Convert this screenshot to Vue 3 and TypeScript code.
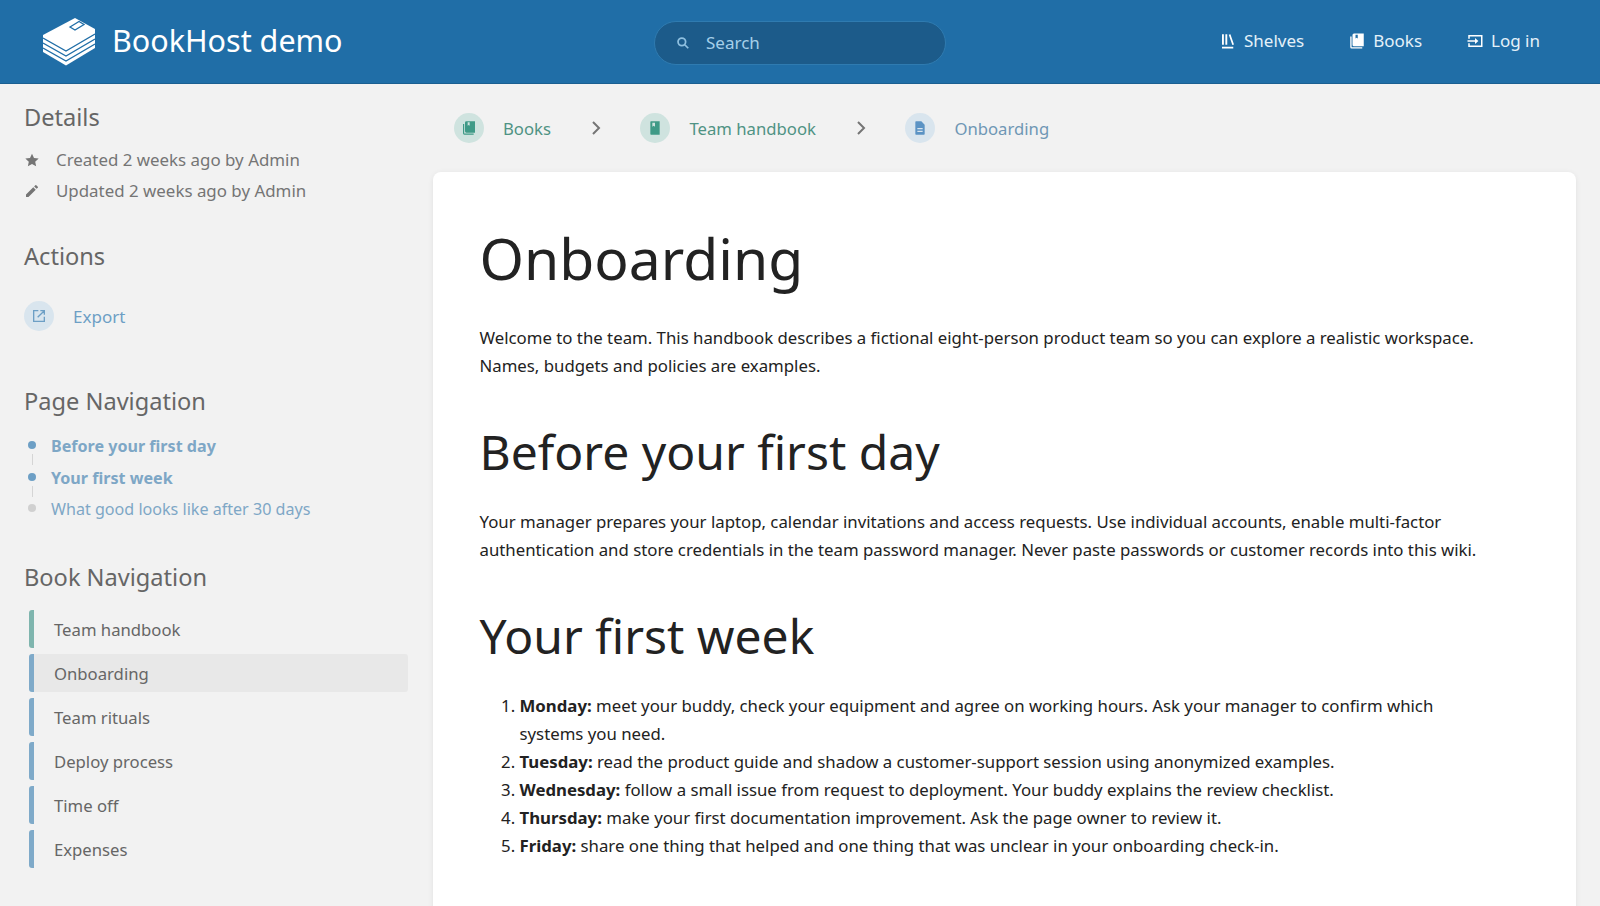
<script setup lang="ts">
interface NavItem {
  label: string
  active?: boolean
}

const pageNav: NavItem[] = [
  { label: 'Before your first day', active: true },
  { label: 'Your first week', active: true },
  { label: 'What good looks like after 30 days' },
]

const bookNav = ['Onboarding', 'Team rituals', 'Deploy process', 'Time off', 'Expenses']

const week = [
  { day: 'Monday:', text: 'meet your buddy, check your equipment and agree on working hours. Ask your manager to confirm which systems you need.' },
  { day: 'Tuesday:', text: 'read the product guide and shadow a customer-support session using anonymized examples.' },
  { day: 'Wednesday:', text: 'follow a small issue from request to deployment. Your buddy explains the review checklist.' },
  { day: 'Thursday:', text: 'make your first documentation improvement. Ask the page owner to review it.' },
  { day: 'Friday:', text: 'share one thing that helped and one thing that was unclear in your onboarding check-in.' },
]
</script>

<template>
  <header class="header">
    <div class="brand">
      <svg class="logo" viewBox="0 0 52 48">
        <path fill="#fff" d="M0 17 L32 0 L52 11 L52 30 L23 47.500 L0 34 Z" />
        <g fill="none" stroke="#206ea7" stroke-width="1.300">
          <path d="M0 20 L23 33 L52 16" />
          <path d="M0 25 L23 38 L52 21" />
          <path d="M0 30 L23 43 L52 26" />
          <path d="M27 9 L36 3.500 L41 6.500 L32 12 Z" />
        </g>
      </svg>
      <span class="site-name">BookHost demo</span>
    </div>
    <div class="search">
      <svg class="search-icon" viewBox="0 0 24 24" fill="none" stroke="#8fc0e0" stroke-width="3">
        <circle cx="10" cy="10" r="6.500" />
        <path d="M15 15 L21 21" />
      </svg>
      <span>Search</span>
    </div>
    <nav class="links">
      <a class="link">
        <svg viewBox="0 0 24 24" fill="#fff"><path d="M4 3h2.500v14H4zM8.500 3H11v14H8.500zM13 3.800l2.200-.8 4.800 13.500-2.200.8zM4 19.500h15V22H4z" /></svg>
        Shelves
      </a>
      <a class="link">
        <svg viewBox="0 0 24 24" fill="#fff"><path d="M8 2h13v17H8a2 2 0 0 1-2-2V4a2 2 0 0 1 2-2zM10 3.500v5l1.500-1 1.500 1v-5zM3 6h1.800v14.200H19V22H5a2 2 0 0 1-2-2z" /></svg>
        Books
      </a>
      <a class="link">
        <svg viewBox="0 0 24 24" fill="#fff"><path d="M3 4h19v16H3v-5h2v3h15V6H5v3H3zM2 11h10V8l4.500 4L12 16v-3H2z" /></svg>
        Log in
      </a>
    </nav>
  </header>

  <main class="layout">
    <aside class="sidebar">
      <section class="details">
        <h5>Details</h5>
        <div class="meta">
          <svg viewBox="0 0 24 24" fill="#757575"><path d="M12 2.500l3 6.500 7 .8-5.200 4.700 1.400 7L12 17.900l-6.200 3.600 1.400-7L2 9.800 9 9z" /></svg>
          Created 2 weeks ago by Admin
        </div>
        <div class="meta">
          <svg viewBox="0 0 24 24" fill="#757575"><path d="M3 17.300V21h3.700L17.600 10.100 13.900 6.400zM20.700 7a1 1 0 0 0 0-1.400l-2.300-2.300a1 1 0 0 0-1.400 0l-1.800 1.800 3.700 3.700z" /></svg>
          Updated 2 weeks ago by Admin
        </div>
      </section>

      <section class="actions">
        <h5>Actions</h5>
        <a class="action">
          <span class="badge badge-page">
            <svg viewBox="0 0 24 24" fill="none" stroke="#6d9fc5" stroke-width="2"><path d="M11 4H4v16h16v-7M10 14L20 4M14 4h6v6" /></svg>
          </span>
          Export
        </a>
      </section>

      <section class="page-nav">
        <h5>Page Navigation</h5>
        <ul class="toc">
          <li v-for="item in pageNav" :key="item.label" :class="{ active: item.active }">{{ item.label }}</li>
        </ul>
      </section>

      <section class="book-nav">
        <h5>Book Navigation</h5>
        <div class="chapter book-row">Team handbook</div>
        <div
          v-for="(name, i) in bookNav"
          :key="name"
          class="chapter"
          :class="{ current: i === 0 }"
        >
          {{ name }}
        </div>
      </section>
    </aside>

    <div class="content">
      <div class="crumbs">
        <a class="crumb book">
          <span class="badge badge-book">
            <svg viewBox="0 0 24 24" fill="#3f9a87"><path d="M8 2h13v17H8a2 2 0 0 1-2-2V4a2 2 0 0 1 2-2zM10 3.500v5l1.500-1 1.500 1v-5zM3 6h1.800v14.200H19V22H5a2 2 0 0 1-2-2z" /></svg>
          </span>
          Books
        </a>
        <svg class="chevron" viewBox="0 0 12 16" fill="none" stroke="#757575" stroke-width="2"><path d="M3 2l6 6-6 6" /></svg>
        <a class="crumb book">
          <span class="badge badge-book">
            <svg viewBox="0 0 24 24" fill="#3f9a87"><path d="M6 2h13v20H6a1 1 0 0 1-1-1V3a1 1 0 0 1 1-1zM8 4v6l2-1.500L12 10V4z" /></svg>
          </span>
          Team handbook
        </a>
        <svg class="chevron" viewBox="0 0 12 16" fill="none" stroke="#757575" stroke-width="2"><path d="M3 2l6 6-6 6" /></svg>
        <a class="crumb page">
          <span class="badge badge-page">
            <svg viewBox="0 0 24 24" fill="#5b93c4"><path d="M6 2h8l5 5v14a1 1 0 0 1-1 1H6a1 1 0 0 1-1-1V3a1 1 0 0 1 1-1zM8 12v2h8v-2zM8 16v2h8v-2z" /></svg>
          </span>
          Onboarding
        </a>
      </div>

      <article class="card">
        <h1>Onboarding</h1>
        <p>Welcome to the team. This handbook describes a fictional eight-person product team so you can explore a realistic workspace. Names, budgets and policies are examples.</p>
        <h2>Before your first day</h2>
        <p>Your manager prepares your laptop, calendar invitations and access requests. Use individual accounts, enable multi-factor authentication and store credentials in the team password manager. Never paste passwords or customer records into this wiki.</p>
        <h2>Your first week</h2>
        <ol>
          <li v-for="row in week" :key="row.day"><strong>{{ row.day }}</strong> {{ row.text }}</li>
        </ol>
      </article>
    </div>
  </main>
</template>

<style>
html,
body {
  margin: 0;
  height: 906px;
  overflow: hidden;
  background: #f2f2f2;
}
</style>

<style scoped>
* {
  box-sizing: border-box;
}
.header,
.layout {
  font-family: "Noto Sans", sans-serif;
}
.header {
  height: 84px;
  background: #206ea7;
  border-bottom: 1px solid #1b5f91;
  display: grid;
  grid-template-columns: 611px 292px 1fr;
  align-items: center;
  padding: 0 60px 0 43px;
  color: #fff;
}
.brand {
  display: flex;
  align-items: center;
  gap: 17px;
}
.logo {
  width: 52px;
  height: 48px;
}
.site-name {
  font-size: 30.500px;
  padding-bottom: 3px;
}
.search {
  height: 44px;
  margin-top: 2px;
  border-radius: 22px;
  background: #1c5b8a;
  border: 1px solid #2f7bb0;
  display: flex;
  align-items: center;
  padding: 0 0 0 21px;
  color: #a5cfe9;
  font-size: 17px;
}
.search-icon {
  width: 14px;
  height: 14px;
  margin-right: 16px;
}
.links {
  display: flex;
  justify-content: flex-end;
  gap: 44px;
  padding-bottom: 2px;
}
.link {
  display: flex;
  align-items: center;
  gap: 7px;
  font-size: 17px;
  color: #e4f1f9;
}
.link svg {
  width: 18px;
  height: 18px;
}

.layout {
  display: grid;
  grid-template-columns: 432.500px 1fr;
  padding-right: 24px;
}
.sidebar {
  padding: 17px 24px 0;
  color: #666;
}
h5 {
  margin: 0;
  font-size: 23.600px;
  line-height: 32px;
  font-weight: 400;
  color: #666;
}
.details {
  height: 139px;
}
.meta {
  display: flex;
  align-items: center;
  height: 31px;
  font-size: 16.900px;
  color: #757575;
}
.meta:first-of-type {
  margin-top: 11px;
}
.meta svg {
  width: 16px;
  height: 16px;
  margin-right: 16px;
}
.actions {
  height: 145px;
}
.action {
  display: flex;
  align-items: center;
  gap: 19px;
  margin-top: 29px;
  font-size: 17px;
  color: #6d9fc5;
}
.badge {
  width: 30px;
  height: 30px;
  border-radius: 50%;
  display: inline-flex;
  align-items: center;
  justify-content: center;
  flex: none;
}
.badge svg {
  width: 16px;
  height: 16px;
}
.badge-page {
  background: #d9e5ee;
}
.badge-book {
  background: #cfe3df;
}
.page-nav {
  height: 176px;
}
.toc {
  list-style: none;
  margin: 14px 0 0;
  padding: 0 0 0 27px;
  font-size: 16.100px;
  color: #7ea7c6;
}
.toc li {
  position: relative;
  height: 31.500px;
  line-height: 31px;
}
.toc li::before {
  content: "";
  position: absolute;
  left: -23px;
  top: 10px;
  width: 8px;
  height: 8px;
  border-radius: 50%;
  background: #d0d0d0;
}
.toc li.active::before {
  background: #6d9fc5;
}
.toc li:not(:last-child)::after {
  content: "";
  position: absolute;
  left: -19.500px;
  top: 23px;
  width: 1px;
  height: 11px;
  background: #d5d5d5;
}
.toc li.active {
  font-weight: 700;
}
.chapter {
  height: 38px;
  margin: 6px 1px 0 5px;
  padding-left: 20px;
  border-left: 5px solid #7faac9;
  border-radius: 3px;
  display: flex;
  align-items: center;
  font-size: 16.700px;
  color: #666;
}
.book-nav h5 {
  margin-bottom: 17px;
}
.book-row {
  border-left-color: #7fb5ae;
}
.current {
  background: #e8e8e8;
}

.crumbs {
  display: flex;
  align-items: center;
  height: 88px;
  padding-left: 21px;
}
.crumb {
  display: flex;
  align-items: center;
  gap: 19.500px;
  font-size: 16.700px;
}
.crumb.book {
  color: #4f9384;
}
.crumb.page {
  color: #6f97b5;
}
.chevron {
  width: 12px;
  height: 16px;
  margin: 0 38px 0 39px;
}
.card {
  background: #fff;
  border-radius: 8px;
  padding: 48px 91px 0 47px;
  height: 800px;
  box-shadow: 0 1px 6px -1px rgba(0, 0, 0, 0.1);
  color: #222;
}
h1,
h2 {
  font-weight: 400;
  margin: 0;
}
h1 {
  font-size: 57px;
  line-height: 76px;
  margin-bottom: 28px;
}
h2 {
  font-size: 48px;
  line-height: 60px;
  margin: 42px 0 26px;
}
p {
  margin: 0;
  font-size: 16.800px;
  line-height: 28px;
}
ol {
  margin: 0;
  padding-left: 40px;
  font-size: 16.800px;
  line-height: 28px;
}
</style>
